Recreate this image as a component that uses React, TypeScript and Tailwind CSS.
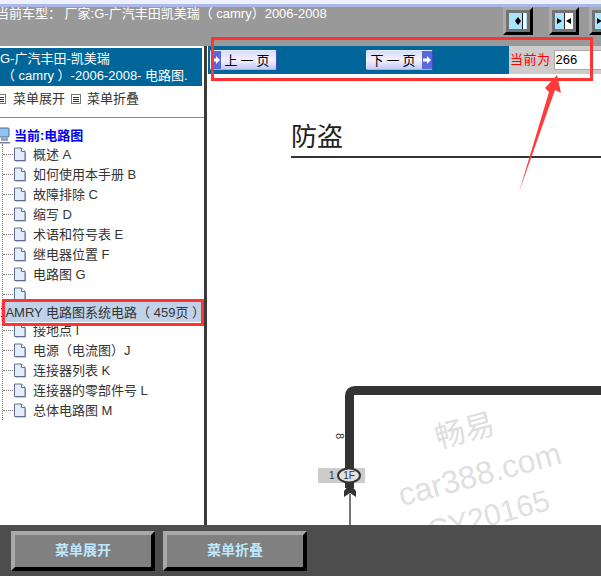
const FONT = '"Liberation Sans", "Noto Sans CJK SC", sans-serif';

function ToolIcon({ split, className }: { split?: boolean; className?: string }) {
  return (
    <div className={`flex h-[28px] w-[30px] shrink-0 border-[3px] border-t-[#ababab] border-l-[#ababab] border-r-black border-b-black bg-[#737373] p-[3px] ${className ?? ''}`}>
      <svg width="18" height="16" viewBox="0 0 18 16" className="block">
        <rect width="18" height="16" fill={split ? '#ffffff' : '#a8e4fb'} />
        {split ? (
          <>
            <rect width="9" height="16" fill="#a8e4fb" />
            <rect x="9" width="1" height="16" fill="#222" />
            <path d="M2 5 L2 11 L7 8 Z M16 5 L16 11 L11 8 Z" fill="#000" />
          </>
        ) : (
          <>
            <rect x="14" width="3" height="16" fill="#fff" />
            <rect x="13" width="1" height="16" fill="#222" />
            <path d="M9 4 L12 8 L9 12 L6 8 Z" fill="#000" />
          </>
        )}
      </svg>
    </div>
  );
}

function PageBtn({ label, next }: { label: string; next?: boolean }) {
  const arrow = (
    <span className="flex h-full w-[10px] items-center justify-center bg-[#5a68d8]">
      <svg width="8" height="8" viewBox="0 0 8 8">
        <path d="M0 2.5 H4 V0 L8 4 L4 8 V5.5 H0 Z" fill="#fff" />
      </svg>
    </span>
  );
  return (
    <div className="flex h-[20px] w-[67px] items-center overflow-hidden rounded-[2px] border border-[#e8ecff] border-r-[#3f4ac0] border-b-[#aab0e8] bg-gradient-to-b from-[#d8dcfa] via-[#f2f3ff] to-[#c4c9f4] text-[13px] leading-none text-black">
      {!next && arrow}
      <span className="flex-1 text-center tracking-[3px]">{label}</span>
      {next && arrow}
    </div>
  );
}

function DocIcon() {
  return (
    <svg width="14" height="15" viewBox="0 0 14 15" className="shrink-0">
      <path d="M2.5 2.5 H9 L13 6 V14.5 H2.5 Z" fill="#9a9aa6" />
      <path d="M1.5 1 H8.500 L12 4.500 V13.500 H1.500 Z" fill="#e4eefb" stroke="#5f6f9a" strokeWidth="1" />
      <path d="M8.500 1 V4.500 H12" fill="#fff" stroke="#5f6f9a" strokeWidth="1" />
    </svg>
  );
}

function TreeRow({ label }: { label?: string }) {
  return (
    <div className="flex h-[20px] items-center">
      <div className="w-[10px] shrink-0 border-t border-dotted border-[#777]" />
      <DocIcon />
      <span className="ml-[6px] whitespace-nowrap text-[13px] leading-none text-[#333]">{label}</span>
    </div>
  );
}

function MiniBox() {
  return (
    <span className="flex h-[10px] w-[10px] shrink-0 flex-col items-center justify-center gap-px border border-[#777] bg-white">
      <span className="h-px w-[6px] bg-[#333]" />
      <span className="h-px w-[6px] bg-[#333]" />
      <span className="h-px w-[6px] bg-[#333]" />
    </span>
  );
}

function FootBtn({ label }: { label: string }) {
  return (
    <div className="flex h-[40px] w-[144px] items-center justify-center border-4 border-t-[#a8a8a8] border-l-[#a8a8a8] border-r-black border-b-black bg-[#808080] text-[14px] font-bold text-[#bce8ff]">
      {label}
    </div>
  );
}

export default function App() {
  return (
    <div className="relative flex h-[576px] w-[601px] flex-col overflow-hidden bg-white" style={{ fontFamily: FONT }}>
      <div className="h-[4px] bg-[#eef1fb]" />
      <div className="h-[3px] bg-[#a9b8e6]" />
      {/* top bar */}
      <div className="flex h-[39px] items-start bg-[#999999]">
        <div className="ml-[-4px] min-w-0 flex-1 whitespace-nowrap text-[13px] leading-[14px] text-white">
          当前车型： 厂家:G-广汽丰田凯美瑞（ camry）2006-2008
        </div>
        <ToolIcon />
        <ToolIcon split className="ml-[16px]" />
        <ToolIcon split className="ml-[10px] mr-[-18px]" />
      </div>

      <div className="flex min-h-0 flex-1">
        {/* left */}
        <div className="w-[204px] shrink-0 overflow-hidden bg-white">
          <div className="mr-[2px] mt-[2px] h-[38px] bg-[#006699] pt-[2px] text-[13px] leading-[17px] text-white">
            <div className="whitespace-nowrap">G-广汽丰田-凯美瑞</div>
            <div className="ml-[2px] whitespace-nowrap">（ camry ）-2006-2008- 电路图.</div>
          </div>
          <div className="flex h-[26px] items-center text-[13px] text-[#333]">
            <span className="-ml-[4px]"><MiniBox /></span>
            <span className="ml-[7px]">菜单展开</span>
            <span className="ml-[6px]"><MiniBox /></span>
            <span className="ml-[6px]">菜单折叠</span>
          </div>
          <div className="mt-[5px] h-px bg-[#888]" />
          <div className="flex h-[20px] items-center pt-[14px]">
            <svg width="14" height="17" viewBox="0 0 14 17" className="-ml-[2px] shrink-0">
              <rect x="1" y="1" width="10" height="9" rx="1" fill="#8fc4ee" stroke="#4a6a9a" />
              <rect x="3" y="11" width="7" height="3" fill="#9aa2b8" />
              <path d="M1 15 H12 V16.500 H1 Z" fill="#77809a" />
            </svg>
            <span className="ml-[2px] text-[13px] font-bold leading-none text-[#0000ee]">当前:电路图</span>
          </div>
          <div className="ml-[2px] mt-[6px] border-l border-dotted border-[#777]">
            <TreeRow label="概述 A" />
            <TreeRow label="如何使用本手册 B" />
            <TreeRow label="故障排除 C" />
            <TreeRow label="缩写 D" />
            <TreeRow label="术语和符号表 E" />
            <TreeRow label="继电器位置 F" />
            <TreeRow label="电路图 G" />
            <TreeRow />
            <div className="relative z-10 -my-[2px] -ml-[2px] flex h-[20px] items-center overflow-hidden bg-[#c0d2ea] text-[13px] leading-none whitespace-nowrap text-[#333]">
              <span className="-ml-[5px]">CAMRY 电路图系统电路（ 459页 ）</span>
            </div>
            <TreeRow label="接地点 I" />
            <TreeRow label="电源（电流图）J" />
            <TreeRow label="连接器列表 K" />
            <TreeRow label="连接器的零部件号 L" />
            <TreeRow label="总体电路图 M" />
          </div>
        </div>

        <div className="w-[3px] shrink-0 bg-[#3a3a3a]" />

        {/* right */}
        <div className="relative min-w-0 flex-1 overflow-hidden bg-white">
          <div className="flex h-[28px] items-center">
            <div className="ml-[1px] flex h-full w-[301px] shrink-0 items-center bg-[#006699] pl-[2px]">
              <PageBtn label="上一页" />
              <div className="ml-[89px]"><PageBtn label="下一页" next /></div>
            </div>
            <div className="flex h-full flex-1 items-center whitespace-nowrap bg-[#cccccc] pl-[1px]">
              <span className="shrink-0 text-[13px] tracking-[0.5px] text-[#ff0000]">当前为</span>
              <div className="ml-[3px] flex h-[20px] w-[60px] shrink-0 items-center border border-[#aaa] bg-white pl-[1px] text-[13px] text-black">266</div>
            </div>
          </div>

          <div className="ml-[84px] mt-[46px] border-b-2 border-[#333] pb-[2px] text-[26px] leading-[34px] text-[#222]">防盗</div>

          {/* diagram canvas */}
          <svg className="absolute left-[110px] top-[310px]" width="284" height="170" viewBox="0 0 284 170">
            <path d="M32.500 132 V40 Q32.500 34.500 38 34.500 H284" fill="none" stroke="#333" strokeWidth="9" />
            <rect x="1" y="112" width="47" height="15" fill="#cccccc" />
            <ellipse cx="32" cy="119.500" rx="11" ry="7" fill="#e2e2e2" stroke="#333" strokeWidth="2" />
            <path d="M33 128 L39 135 V141 L33 137 L27 141 V135 Z" fill="#333" />
            <rect x="32" y="138" width="2" height="32" fill="#777" />
            <text x="12" y="123" fontSize="10" fill="#333">1</text>
            <text x="32" y="123" fontSize="10" fill="#333" textAnchor="middle">1F</text>
            <text x="19" y="80" fontSize="11" fill="#333" transform="rotate(90 19 80)" textAnchor="middle">8</text>
          </svg>

          {/* watermark */}
          <div className="absolute left-[228px] top-[370px] -rotate-[15deg] text-[30px] leading-none text-[#dedede]">畅易</div>
          <div className="absolute left-[189px] top-[412px] -rotate-[15deg] text-[32px] leading-none whitespace-nowrap text-[#e0e0e0]">car388.com</div>
          <div className="absolute left-[219px] top-[455px] -rotate-[15deg] text-[30px] leading-none whitespace-nowrap text-[#e0e0e0]">CY20165</div>
        </div>
      </div>

      {/* footer */}
      <div className="relative z-10 flex h-[51px] items-center gap-[8px] bg-[#4d4d4d] pl-[11px]">
        <FootBtn label="菜单展开" />
        <FootBtn label="菜单折叠" />
      </div>

      {/* annotations */}
      <div className="absolute left-[211px] top-[37px] z-20 h-[44px] w-[382px] border-[3px] border-[#ff3333]" />
      <div className="absolute left-[2px] top-[299px] z-20 h-[27px] w-[202px] border-[3px] border-[#ff3333]" />
      <svg className="absolute left-[515px] top-[72px] z-20" width="60" height="122" viewBox="0 0 60 122">
        <path d="M4 120 L34 20 L30 16 L42 3 L46 21 L40 18 Z" fill="#ff3b3b" />
      </svg>
    </div>
  );
}
